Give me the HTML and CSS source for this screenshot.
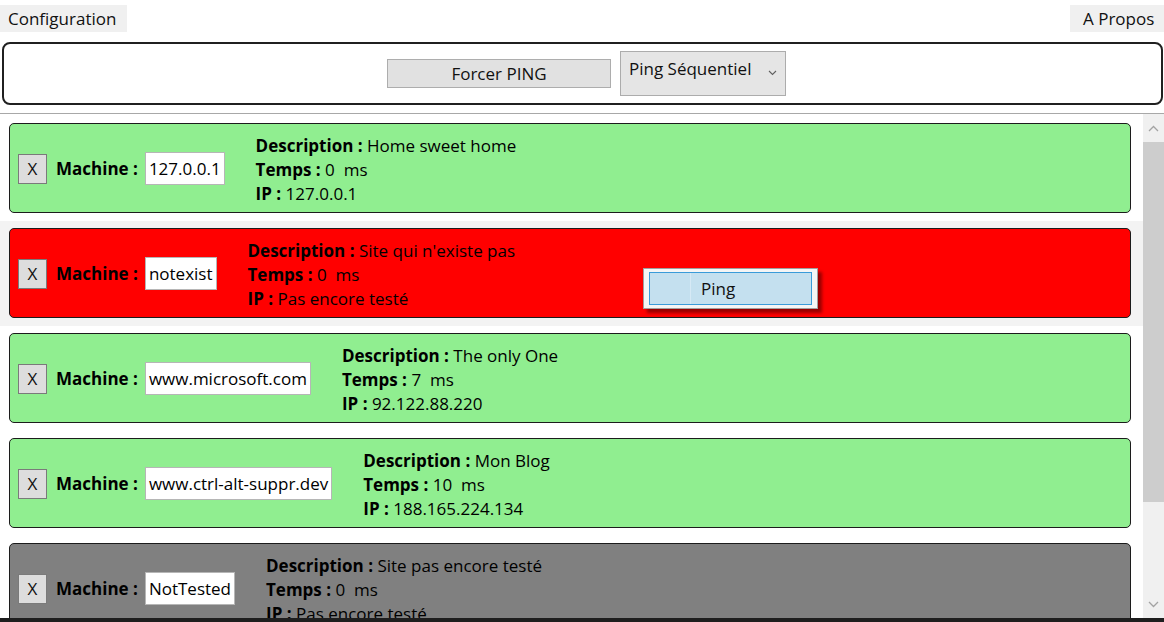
FILE: index.html
```html
<!DOCTYPE html>
<html lang="fr">
<head>
<meta charset="utf-8">
<title>Ping</title>
<link rel="stylesheet" href="styles.css">
</head>
<body>
<div class="window">
  <div class="menubar">
    <div class="menu-btn">Configuration</div>
    <div class="menu-btn about">A Propos</div>
  </div>

  <div class="toolbar">
    <button class="force-btn">Forcer PING</button>
    <div class="combo">
      <span class="combo-text">Ping Séquentiel</span>
      <svg class="combo-arrow" width="9" height="6" viewBox="0 0 9 6"><path d="M1 1 L4.5 4.5 L8 1" fill="none" stroke="#606060" stroke-width="1.1"/></svg>
    </div>
  </div>

  <div class="list">
    <div class="items">
      <div class="item">
        <div class="card green">
          <button class="del">X</button>
          <span class="label">Machine :</span>
          <span class="textbox">127.0.0.1</span>
          <div class="info">
            <div><b>Description :</b> Home sweet home</div>
            <div><b>Temps :</b> 0&nbsp; ms</div>
            <div><b>IP :</b> 127.0.0.1</div>
          </div>
        </div>
      </div>
      <div class="item selected">
        <div class="card red">
          <button class="del">X</button>
          <span class="label">Machine :</span>
          <span class="textbox">notexist</span>
          <div class="info">
            <div><b>Description :</b> Site qui n'existe pas</div>
            <div><b>Temps :</b> 0&nbsp; ms</div>
            <div><b>IP :</b> Pas encore testé</div>
          </div>
        </div>
      </div>
      <div class="item">
        <div class="card green">
          <button class="del">X</button>
          <span class="label">Machine :</span>
          <span class="textbox">www.microsoft.com</span>
          <div class="info">
            <div><b>Description :</b> The only One</div>
            <div><b>Temps :</b> 7&nbsp; ms</div>
            <div><b>IP :</b> 92.122.88.220</div>
          </div>
        </div>
      </div>
      <div class="item">
        <div class="card green">
          <button class="del">X</button>
          <span class="label">Machine :</span>
          <span class="textbox">www.ctrl-alt-suppr.dev</span>
          <div class="info">
            <div><b>Description :</b> Mon Blog</div>
            <div><b>Temps :</b> 10&nbsp; ms</div>
            <div><b>IP :</b> 188.165.224.134</div>
          </div>
        </div>
      </div>
      <div class="item">
        <div class="card gray">
          <button class="del">X</button>
          <span class="label">Machine :</span>
          <span class="textbox">NotTested</span>
          <div class="info">
            <div><b>Description :</b> Site pas encore testé</div>
            <div><b>Temps :</b> 0&nbsp; ms</div>
            <div><b>IP :</b> Pas encore testé</div>
          </div>
        </div>
      </div>
    </div>
    <div class="scrollbar">
      <div class="sb-btn">
        <svg width="11" height="7" viewBox="0 0 11 7"><path d="M1 6 L5.5 1.5 L10 6" fill="none" stroke="#a3a3a3" stroke-width="1.3"/></svg>
      </div>
      <div class="sb-thumb"></div>
      <div class="sb-track"></div>
      <div class="sb-btn">
        <svg width="11" height="7" viewBox="0 0 11 7"><path d="M1 1 L5.5 5.5 L10 1" fill="none" stroke="#a3a3a3" stroke-width="1.3"/></svg>
      </div>
    </div>
  </div>
  <div class="bottom-edge"></div>

  <div class="context-menu">
    <div class="cm-item">
      <span class="cm-icon"></span>
      <span class="cm-text">Ping</span>
    </div>
  </div>
</div>
</body>
</html>
```

FILE: styles.css
```css
* { box-sizing: border-box; }

html, body {
  margin: 0;
  padding: 0;
  background: #ffffff;
}

body {
  font-family: "Open Sans", "Noto Sans", "Liberation Sans", sans-serif;
  font-size: 17px;
  color: #000;
}

.window {
  position: relative;
  width: 1164px;
  height: 622px;
  overflow: hidden;
  display: flex;
  flex-direction: column;
  background: #fff;
}

/* menu bar */
.menubar {
  display: flex;
  justify-content: space-between;
  padding-top: 5px;
  height: 32px;
  flex: none;
}

.menu-btn {
  background: #f0f0f0;
  height: 27px;
  line-height: 27px;
  padding: 0 9px 0 8px;
  width: 127px;
  color: #111;
}

.menu-btn.about {
  width: 94px;
  padding-left: 13px;
}

/* toolbar */
.toolbar {
  flex: none;
  margin: 10px 1px 0 2px;
  height: 63px;
  border: 2px solid #202020;
  border-radius: 8px;
  display: flex;
  align-items: center;
  justify-content: center;
  padding-left: 8px;
}

.force-btn {
  font: inherit;
  color: #111;
  width: 224px;
  height: 29px;
  background: #e1e1e1;
  border: 1px solid #adadad;
  padding: 0;
  line-height: 27px;
}

.combo {
  margin-left: 9px;
  width: 166px;
  height: 45px;
  background: #e5e5e5;
  border: 1px solid #acacac;
  display: flex;
  align-items: flex-start;
  padding: 5px 0 0 8px;
  position: relative;
}

.combo-text {
  line-height: 24px;
  color: #111;
}

.combo-arrow {
  position: absolute;
  left: 147px;
  top: 18px;
}

/* list */
.list {
  flex: 1;
  margin-top: 8px;
  border-top: 1px solid #a8a8a8;
  display: flex;
  min-height: 0;
}

.items {
  flex: 1;
  overflow: hidden;
  padding-top: 2px;
}

.item {
  height: 105px;
  padding: 7px 12px 8px 9px;
}

.item.selected {
  background: #f3f3f3;
}

.card {
  height: 90px;
  border: 1px solid #1c1c1c;
  border-radius: 5px;
  display: flex;
  align-items: center;
  padding-left: 8px;
}

.card.green { background: #90ee90; }
.card.red { background: #ff0000; }
.card.gray { background: #808080; }

.del {
  font: inherit;
  width: 29px;
  height: 30px;
  padding: 0;
  background: #dddddd;
  border: 1px solid #7a7a7a;
  color: #111;
  line-height: 28px;
  margin-top: 2px;
}

.label {
  font-weight: bold;
  margin-left: 9px;
}

.textbox {
  margin-left: 7px;
  height: 33px;
  line-height: 31px;
  padding: 0 3px 0 3px;
  background: #fff;
  border: 1px solid rgba(110, 110, 110, 0.5);
  white-space: nowrap;
}

.info {
  margin-left: 31px;
  line-height: 24px;
  margin-top: 4px;
  white-space: nowrap;
}

.info b { font-weight: bold; }

/* scrollbar */
.scrollbar {
  width: 21px;
  flex: none;
  background: #f0f0f0;
  display: flex;
  flex-direction: column;
}

.sb-btn {
  height: 28px;
  display: flex;
  align-items: center;
  justify-content: center;
  flex: none;
}

.sb-thumb {
  height: 360px;
  background: #cdcdcd;
  margin: 0 0 0 0;
  flex: none;
}

.sb-track { flex: 1; }

.bottom-edge {
  flex: none;
  height: 4px;
  background: #1e1e1e;
}

/* context menu */
.context-menu {
  position: absolute;
  left: 643px;
  top: 268px;
  width: 175px;
  height: 41px;
  background: #f5f5f5;
  border: 1px solid #a0a0a0;
  padding: 3px 5px;
  box-shadow: 4px 4px 3px rgba(0, 0, 0, 0.4);
}

.cm-item {
  height: 33px;
  background: #c4e0ef;
  border: 1px solid #3a9bd9;
  display: flex;
  align-items: center;
}

.cm-icon {
  width: 41px;
  height: 100%;
  border-right: 1px solid #d6e9f5;
  flex: none;
}

.cm-text {
  margin-left: 10px;
  color: #111;
  line-height: 24px;
}
```
